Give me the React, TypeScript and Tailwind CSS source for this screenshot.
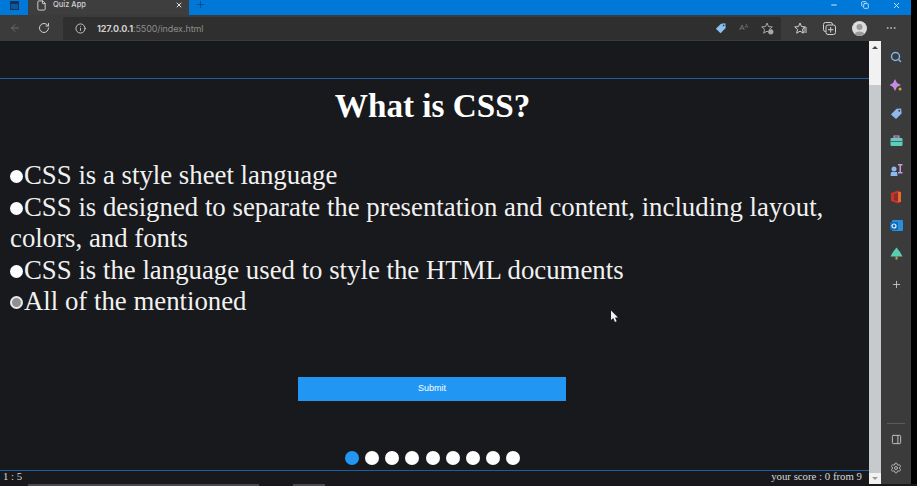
import React from 'react';
import { ArrowLeft, RotateCw, Info, File, X, Plus, Minus, Copy, Search, Settings, PanelRight, MoreHorizontal } from 'lucide-react';

const options = [
  'CSS is a style sheet language',
  'CSS is designed to separate the presentation and content, including layout, colors, and fonts',
  'CSS is the language used to style the HTML documents',
  'All of the mentioned',
];

const Tag = ({ color, size = 14 }: { color: string; size?: number }) => (
  <svg width={size} height={size} viewBox="0 0 14 14">
    <path d="M1 8 L7 2 L12 1.5 L12.5 7 L6.5 13 Z" fill={color} />
    <circle cx="10" cy="4" r="1" fill="#3b3b3b" />
  </svg>
);

const starPath = 'M6 1 L7.5 4.6 L11.3 4.9 L8.4 7.4 L9.3 11.2 L6 9.2 L2.7 11.2 L3.6 7.4 L0.7 4.9 L4.5 4.6 Z';

const SideIcons = () => (
  <div className="flex flex-col items-center">
    <div className="h-[28px] flex items-center justify-center"><Search size={12} strokeWidth={3} color="#7db4e6" /></div>
    <div className="h-[28px] flex items-center justify-center">
      <svg width="14" height="14" viewBox="0 0 14 14">
        <path d="M6 1 L8 5 L12 7 L8 9 L6 13 L4 9 L0.5 7 L4 5 Z" fill="#c58be0" />
        <circle cx="11" cy="11" r="1.5" fill="#d9a520" />
      </svg>
    </div>
    <div className="h-[28px] flex items-center justify-center"><Tag color="#8db9ec" size={13} /></div>
    <div className="h-[28px] flex items-center justify-center">
      <svg width="13" height="12" viewBox="0 0 13 12">
        <rect x="0.5" y="3" width="12" height="8" rx="1" fill="#5fcdb8" />
        <rect x="4" y="1" width="5" height="2" fill="none" stroke="#c9a0dc" />
        <rect x="0.5" y="6" width="12" height="1" fill="#3c6f78" />
      </svg>
    </div>
    <div className="h-[28px] flex items-center justify-center">
      <svg width="13" height="13" viewBox="0 0 13 13">
        <circle cx="4" cy="6" r="2.5" fill="#8db9ec" />
        <path d="M0.5 13 L1 9 L7 9 L7.5 13 Z" fill="#8db9ec" />
        <path d="M8 1 H12.5 V2.5 H11 V9 H12.5 V10.5 H8 V9 H9.5 V2.5 H8 Z" fill="#c79be0" />
      </svg>
    </div>
    <div className="h-[28px] flex items-center justify-center">
      <svg width="12" height="14" viewBox="0 0 12 14">
        <path d="M1 3 L8 0.5 L11 2 V12 L8 13.5 L1 11 Z" fill="#c8351f" />
        <path d="M4 4 L8 3 V11 L4 10 Z" fill="#8a2b3a" />
        <rect x="8" y="2" width="3" height="10" fill="#e8692a" />
      </svg>
    </div>
    <div className="h-[28px] flex items-center justify-center">
      <svg width="13" height="13" viewBox="0 0 13 13">
        <rect x="2" y="1" width="11" height="11" rx="1" fill="#2a8fd8" />
        <rect x="0" y="3" width="8" height="8" rx="1" fill="#0f6cbd" />
        <circle cx="4" cy="7" r="2" fill="none" stroke="#e8f2fb" strokeWidth="1.2" />
      </svg>
    </div>
    <div className="h-[29px] flex items-center justify-center">
      <svg width="13" height="13" viewBox="0 0 13 13">
        <path d="M6.5 0.5 L10 5 L12.5 9.5 L0.5 9.5 L3 5 Z" fill="#58cdb0" />
        <rect x="5.5" y="9.5" width="2" height="3" fill="#b8a24a" />
      </svg>
    </div>
    <div className="h-[28px] mt-[2px] flex items-center justify-center"><Plus size={11} color="#c4c4c4" /></div>
  </div>
);

export default function App() {
  return (
    <div className="w-[917px] h-[486px] overflow-hidden bg-[#18191c] flex flex-col">
      <div className="flex h-[484px] shrink-0 bg-black">
        <div className="w-[911px] h-full flex flex-col bg-[#3b3b3b]">
          {/* title bar */}
          <div className="h-[15px] bg-[#0078d7] flex items-stretch shrink-0">
            <div className="w-[28px] flex items-start pt-[1px] justify-center">
              <div className="w-[9px] h-[9px] border border-[#12345a] bg-[#0a5aa0] border-t-[3px]" />
            </div>
            <div className="w-[161px] bg-[#3e3e3e] flex items-start pl-[8px] text-[#d2d2d2]">
              <File size={11} color="#d8d8d8" />
              <span className="ml-[6px] mt-[1px] text-[7.5px] leading-[8px] font-['Inter',sans-serif] font-medium">Quiz App</span>
              <X size={8} strokeWidth={3} className="ml-auto mr-[6px] mt-[1px]" color="#e2e2e2" />
            </div>
            <Plus size={11} color="#0c3f70" strokeWidth={1.5} className="ml-[6px] mt-[-1px]" />
            <div className="ml-auto flex items-start pt-[1px] text-[#d6e8f8]">
              <Minus size={8} strokeWidth={3} />
              <Copy size={8} strokeWidth={2.5} className="ml-[23px]" />
              <X size={9} strokeWidth={2.5} className="ml-[23px] mr-[10px]" />
            </div>
          </div>
          {/* toolbar */}
          <div className="h-[26px] flex items-center shrink-0">
            <ArrowLeft size={12} color="#6a6a6a" className="ml-[9px]" />
            <RotateCw size={12} color="#d0d0d0" strokeWidth={2} className="ml-[17px]" />
            <div className="ml-[13px] w-[718px] h-[23px] bg-[#2f2f2f] rounded-[2px] flex items-center">
              <Info size={11} color="#cfcfcf" className="ml-[12px]" />
              <span className="ml-[11px] text-[9px] font-['Inter',sans-serif] leading-none tracking-[-0.1px]">
                <span className="font-bold text-[#cfcfcf]">127.0.0.1</span>
                <span className="text-[#8c8c8c]">:5500/index.html</span>
              </span>
              <div className="ml-auto flex items-center mr-[7px]">
                <Tag color="#8cc0f0" size={12} />
                <span className="ml-[12px] text-[8px] text-[#7a7a7a] font-['Liberation_Sans',sans-serif]">A<sup className="text-[5px]">A</sup></span>
                <svg width="13" height="13" viewBox="0 0 13 13" className="ml-[13px]">
                  <path d={starPath} fill="none" stroke="#a8a8a8" strokeWidth="1" />
                  <circle cx="9.8" cy="9.8" r="2.6" fill="#a8a8a8" />
                </svg>
              </div>
            </div>
            <svg width="13" height="13" viewBox="0 0 13 13" className="ml-[13px]">
              <path d={starPath} fill="none" stroke="#d0d0d0" strokeWidth="1" />
              <path d="M9 6 H13 M9.5 8 H13 M9 10 H13" stroke="#d0d0d0" strokeWidth="1" />
            </svg>
            <svg width="13" height="13" viewBox="0 0 13 13" className="ml-[16px]">
              <rect x="0.5" y="0.5" width="9" height="9" rx="2" fill="none" stroke="#d0d0d0" />
              <rect x="3" y="3" width="9.5" height="9.5" rx="2" fill="#3b3b3b" stroke="#d0d0d0" />
              <path d="M7.7 5 V10.5 M5 7.7 H10.5" stroke="#d0d0d0" />
            </svg>
            <svg width="15" height="15" viewBox="0 0 15 15" className="ml-[16px]">
              <circle cx="7.5" cy="7.5" r="7.5" fill="#dcdcdc" />
              <circle cx="7.5" cy="6" r="3" fill="#9a9a9a" />
              <path d="M2.5 13 C3.5 9.5 11.5 9.5 12.5 13 A7.5 7.5 0 0 1 2.5 13 Z" fill="#9a9a9a" />
            </svg>
            <MoreHorizontal size={12} color="#b8b8b8" className="ml-[18px]" />
          </div>
          {/* main */}
          <div className="flex-1 flex min-h-0">
            <div className="w-[869px] bg-[#18191c] flex flex-col text-white font-['Liberation_Serif',serif] relative">
              <div className="h-[38px] border-b border-[#1f5f9c] shrink-0" />
              <h1 className="text-[33.2px] leading-[53px] font-bold text-center pr-[4px]">What is CSS?</h1>
              <div className="pl-[10px] pr-[40px] mt-[28px] text-[26.8px] leading-[31.5px] text-[#f1f1f1]">
                {options.map((o, i) => (
                  <div key={i}>
                    <span className={`inline-block w-[13px] h-[13px] mr-[1px] rounded-full align-[1px] ${i === 3 ? 'bg-[#8f8f8f] border-2 border-[#e8e8e8]' : 'bg-white'}`} />
                    {o}
                  </div>
                ))}
              </div>
              <div className="flex justify-center mt-[59px] pr-[5px]">
                <button className="w-[268px] h-[24px] bg-[#2196f3] text-white text-[9px] font-medium font-['Liberation_Sans',sans-serif]">Submit</button>
              </div>
              <div className="flex justify-center gap-[6.1px] mt-[50px] pr-[4px]">
                {[0, 1, 2, 3, 4, 5, 6, 7, 8].map((i) => (
                  <span key={i} className={`w-[14px] h-[14px] rounded-full ${i === 0 ? 'bg-[#2196f3]' : 'bg-white'}`} />
                ))}
              </div>
              <div className="mt-[5px] border-t border-[#1f5f9c] flex justify-between text-[10.8px] leading-[11px] pl-[3px] text-[#d8d8d8] pr-[7px]">
                <span>1 : 5</span>
                <span>your score : 0 from 9</span>
              </div>
              {/* mouse pointer */}
              <svg width="9" height="13" viewBox="0 0 9 13" className="absolute left-[610px] top-[269px]">
                <path d="M1 0.5 V10 L3.2 8 L5 12 L6.6 11.2 L5 7.5 L8 7.5 Z" fill="#f0f0f0" />
              </svg>
            </div>
            {/* scrollbar */}
            <div className="w-[12px] flex flex-col bg-[#c6cacc] shrink-0">
              <div className="h-[44px] bg-[#f1f1f1] flex justify-center pt-[5px]">
                <div className="w-0 h-0 border-x-[3px] border-x-transparent border-b-[3px] border-b-[#444]" />
              </div>
              <div className="flex-1" />
              <div className="h-[11px] bg-[#f1f1f1] flex justify-center pt-[4px]">
                <div className="w-0 h-0 border-x-[3px] border-x-transparent border-t-[3px] border-t-[#999]" />
              </div>
            </div>
            {/* sidebar */}
            <div className="flex-1 flex flex-col items-center pt-[2px]">
              <SideIcons />
              <div className="mt-auto flex flex-col items-center pb-[10px]">
                <div className="w-[18px] border-t border-[#5a5a5a] mb-[10px]" />
                <PanelRight size={11} color="#c8c8c8" />
                <Settings size={12} color="#b8b8b8" className="mt-[17px]" />
              </div>
            </div>
          </div>
        </div>
      </div>
      {/* sliver of the taskbar under the window */}
      <div className="flex-1 flex pl-[28px]">
        <div className="w-[231px] bg-[#4a4a4a]" />
        <div className="w-[32px] ml-[34px] bg-[#4a4a4a]" />
      </div>
    </div>
  );
}
